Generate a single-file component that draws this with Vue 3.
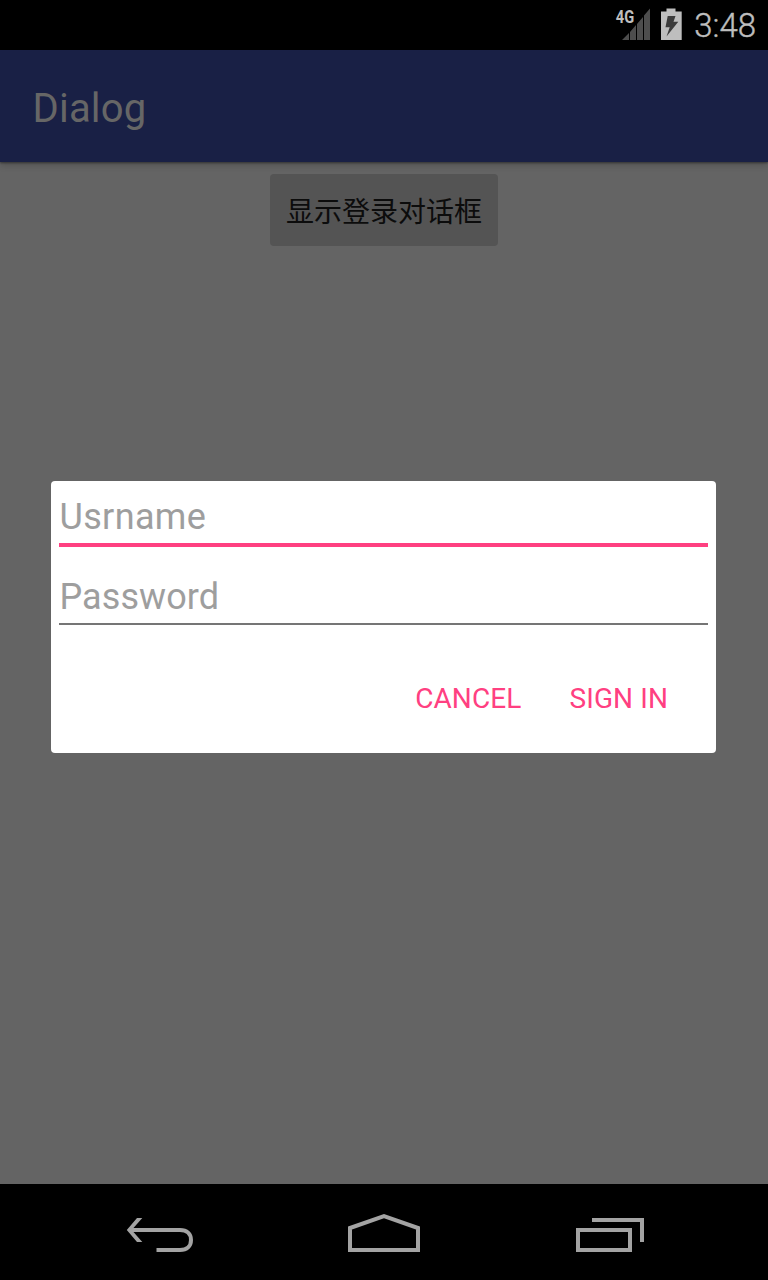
<script setup>
const fields = [
  { label: 'Usrname', active: true },
  { label: 'Password', active: false },
]
const actions = ['CANCEL', 'SIGN IN']
</script>

<template>
  <div class="screen">
    <header class="status">
      <svg class="signal" width="36" height="34" viewBox="0 0 36 34">
        <path d="M8 33L15 26V33ZM16 33V25L22 18V33ZM23 33V17L29 10V33ZM30 33V8.500L36 1.500V33Z" fill="#4d4d4d" />
        <text class="net" x="1.800" y="16.400" textLength="18.400" lengthAdjust="spacingAndGlyphs">4G</text>
      </svg>
      <svg class="battery" width="22" height="34" viewBox="0 0 22 34">
        <path d="M6.500 1.500H15.500V4.500H21.700V33H1V4.500H6.500Z" fill="#bebebe" />
        <path d="M7.700 9H15.500L13.500 14.700H18.300L6.500 29.500L9.700 20.300H5.500Z" fill="#3c3c3c" />
      </svg>
      <span class="time">3:48</span>
    </header>
    <div class="appbar"><span class="title">Dialog</span></div>
    <main class="content">
      <button class="show">显示登录对话框</button>
      <section class="dialog">
        <div v-for="f in fields" :key="f.label" class="field" :class="{ active: f.active }">
          <span class="hint">{{ f.label }}</span>
        </div>
        <div class="actions">
          <span v-for="a in actions" :key="a" class="action">{{ a }}</span>
        </div>
      </section>
    </main>
    <nav class="nav">
      <svg width="256" height="96" viewBox="0 0 256 96" fill="none" stroke="#a3a3a3" stroke-width="4">
        <path d="M129 46H180C187 46 191 50 191 56C191 62 187 66 180 66H156.500" />
        <path d="M137 34H142.300L131.700 46L142.300 58H137L126.800 46Z" fill="#a3a3a3" stroke="none" />
      </svg>
      <svg width="256" height="96" viewBox="0 0 256 96" fill="none" stroke="#a3a3a3" stroke-width="4">
        <path d="M94 66V44L128 32L162 44V66Z" />
      </svg>
      <svg width="256" height="96" viewBox="0 0 256 96" fill="none" stroke="#a3a3a3" stroke-width="4">
        <path d="M66 46H118V66H66ZM80 36H130V58" />
      </svg>
    </nav>
  </div>
</template>

<style>
body {
  margin: 0;
  background: #646464;
}
</style>

<style scoped>
.screen {
  width: 768px;
  height: 1280px;
  display: flex;
  flex-direction: column;
  overflow: hidden;
  background: #646464;
  font-family: Roboto, "Noto Sans CJK SC", sans-serif;
}
.status {
  height: 50px;
  flex: none;
  display: flex;
  justify-content: flex-end;
  box-sizing: border-box;
  padding: 7px 12px 0 0;
  background: #000;
}
.battery {
  margin-left: 10px;
}
.net {
  font-family: Roboto, sans-serif;
  font-size: 18px;
  font-weight: 700;
  fill: #bebebe;
}
.time {
  width: 62px;
  margin-left: 12px;
  font-size: 33px;
  font-weight: 300;
  line-height: 38px;
  text-align: right;
  white-space: nowrap;
  color: #bebebe;
  -webkit-text-stroke: 0.4px #bebebe;
}
.appbar {
  height: 112px;
  flex: none;
  display: flex;
  align-items: center;
  box-sizing: border-box;
  padding: 5px 0 0 32.5px;
  background: #192045;
  box-shadow: 0 1px 2px rgba(0, 0, 0, 0.4), 0 3px 7px rgba(0, 0, 0, 0.2);
  z-index: 1;
}
.title {
  font-size: 40px;
  letter-spacing: 0.2px;
  color: #666;
}
.content {
  flex: 1;
  display: flex;
  flex-direction: column;
  align-items: center;
}
.show {
  width: 228px;
  height: 72px;
  margin-top: 12px;
  padding: 0;
  border: 0;
  border-radius: 4px;
  background: #545454;
  color: #0c0c0c;
  font-family: "Noto Sans CJK SC", sans-serif;
  font-size: 28px;
  line-height: 40px;
}
.dialog {
  width: 665px;
  height: 272px;
  margin: 235px 1px 0 0;
  box-sizing: border-box;
  padding: 0 8px;
  border-radius: 4px;
  background: #fff;
}
.field {
  height: 64px;
  box-sizing: border-box;
  margin-bottom: 16px;
  padding: 14px 0 0 0.5px;
  border-bottom: 2px solid #757575;
}
.field.active {
  height: 66px;
  margin-bottom: 14px;
  border-bottom: 4px solid #ff4081;
}
.hint {
  display: block;
  font-size: 36px;
  line-height: 44px;
  letter-spacing: 0.08px;
  color: #9e9e9e;
}
.active .hint {
  letter-spacing: 0.35px;
}
.actions {
  display: flex;
  justify-content: flex-end;
  gap: 48px;
  margin-top: 57px;
  padding-right: 40px;
}
.action {
  font-size: 28px;
  line-height: 34px;
  letter-spacing: 0.1px;
  color: #ff4081;
}
.nav {
  height: 96px;
  flex: none;
  display: flex;
  background: #000;
}
</style>
